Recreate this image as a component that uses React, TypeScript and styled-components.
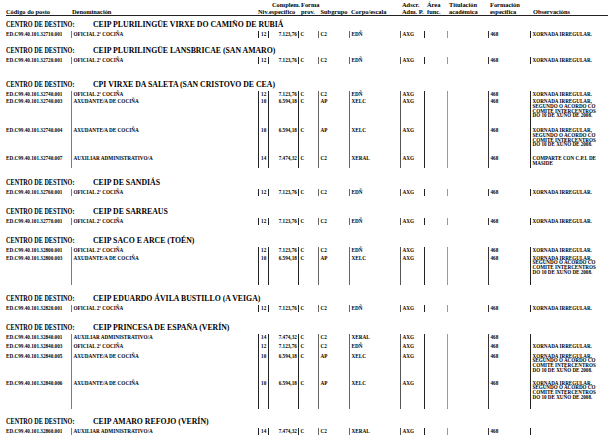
import React from 'react';
import styled, { createGlobalStyle } from 'styled-components';

const GlobalStyle = createGlobalStyle`
  html, body {
    margin: 0;
    padding: 0;
    background: #fff;
  }
  body {
    font-family: "Liberation Serif", "Times New Roman", serif;
    color: #000;
  }
`;

// column widths in px, measured off the printed listing
const COLS = '65px 187px 10px 30px 20px 31px 51px 24px 23px 41px 42px 77px';
const BAR_TONES = ['', '#7a7a7a', '#222', '#222', '#222', '#666', '#666', '#555', '#222', '#999', '#333', '#222'];

const Page = styled.div`
  width: 615px;
  height: 439px;
  overflow: hidden;
  padding-left: 6px;
  box-sizing: border-box;
`;

const HeaderGrid = styled.div`
  display: grid;
  grid-template-columns: ${COLS};
  width: 602px;
  padding-top: 1px;
  border-bottom: 1.5px solid #222;
  font-size: 6.4px;
  font-weight: bold;
  line-height: 7px;
`;

const HeadCell = styled.div<{ $indent: number; $indentTop?: number }>`
  display: flex;
  flex-direction: column;
  justify-content: flex-end;
  height: 14px;
  padding-left: ${(p) => p.$indent}px;
  white-space: nowrap;

  span:first-child {
    padding-left: ${(p) => p.$indentTop ?? 0}px;
  }
`;

const Section = styled.section<{ $gap: number }>`
  margin-top: ${(p) => p.$gap}px;
`;

const Title = styled.h2`
  display: flex;
  margin: 0 0 1.5px;
  height: 10px;
  align-items: center;
  font-size: 8.2px;
  font-weight: bold;
  white-space: nowrap;
`;

const TitleLabel = styled.span`
  width: 87px;
  flex: none;
  display: inline-block;
  transform: scaleX(0.76);
  transform-origin: left center;
`;

const TitleName = styled.span`
  display: inline-block;
  transform: scaleX(0.95);
  transform-origin: left center;
`;

const Row = styled.div<{ $h: number }>`
  display: grid;
  grid-template-columns: ${COLS};
  height: ${(p) => p.$h}px;
  font-size: 5.2px;
  font-weight: bold;
  line-height: 4.7px;
`;

const Cell = styled.div<{ $bar: string; $align?: 'left' | 'right' | 'center' }>`
  border-left: ${(p) => (p.$bar ? `1px solid ${p.$bar}` : 'none')};
  padding: 1.2px 1.2px 0 ${(p) => (p.$bar ? 1.5 : 0)}px;
  text-align: ${(p) => p.$align ?? 'left'};
  white-space: nowrap;
  overflow: visible;
`;

const ObsLine = styled.div`
  font-size: 5.1px;
  line-height: 4.7px;
  white-space: nowrap;
`;

type Post = {
  code: string;
  denom: string;
  niv: string;
  comp: string;
  sub: string;
  corpo: string;
  obs: string[];
  h: number;
};

type Centre = { name: string; gap: number; posts: Post[] };

const LONG_OBS = ['XORNADA IRREGULAR,', 'SEGUNDO O ACORDO CO', 'COMITÉ INTERCENTROS', 'DO 10 DE XUÑO DE 2008.'];

const oficial = (code: string, h = 7): Post => ({
  code, denom: 'OFICIAL 2ª COCIÑA', niv: '12', comp: '7.123,76', sub: 'C2', corpo: 'EDÑ', obs: ['XORNADA IRREGULAR.'], h,
});
const axudante = (code: string, h: number): Post => ({
  code, denom: 'AXUDANTE/A DE COCIÑA', niv: '10', comp: '6.594,18', sub: 'AP', corpo: 'XELC', obs: LONG_OBS, h,
});
const auxiliar = (code: string, h: number, obs: string[] = []): Post => ({
  code, denom: 'AUXILIAR ADMINISTRATIVO/A', niv: '14', comp: '7.474,32', sub: 'C2', corpo: 'XERAL', obs, h,
});

const centres: Centre[] = [
  { name: 'CEIP PLURILINGÜE VIRXE DO CAMIÑO DE RUBIÁ', gap: 3, posts: [oficial('ED.C99.40.101.32710.001')] },
  { name: 'CEIP PLURILINGÜE LANSBRICAE (SAN AMARO)', gap: 7.5, posts: [oficial('ED.C99.40.101.32720.001')] },
  {
    name: 'CPI VIRXE DA SALETA (SAN CRISTOVO DE CEA)',
    gap: 15.5,
    posts: [
      oficial('ED.C99.40.101.32740.001', 7.5),
      axudante('ED.C99.40.101.32740.003', 29),
      axudante('ED.C99.40.101.32740.004', 28),
      auxiliar('ED.C99.40.101.32740.007', 13, ['COMPARTE CON C.P.I. DE', 'MASIDE']),
    ],
  },
  { name: 'CEIP DE SANDIÁS', gap: 9, posts: [oficial('ED.C99.40.101.32760.001')] },
  { name: 'CEIP DE SARREAUS', gap: 10.5, posts: [oficial('ED.C99.40.101.32770.001')] },
  {
    name: 'CEIP SACO E ARCE (TOÉN)',
    gap: 10.5,
    posts: [oficial('ED.C99.40.101.32800.001', 8), axudante('ED.C99.40.101.32800.003', 30.5)],
  },
  { name: 'CEIP EDUARDO ÁVILA BUSTILLO (A VEIGA)', gap: 8, posts: [oficial('ED.C99.40.101.32820.001')] },
  {
    name: 'CEIP PRINCESA DE ESPAÑA (VERÍN)',
    gap: 10.5,
    posts: [
      auxiliar('ED.C99.40.101.32840.001', 9),
      oficial('ED.C99.40.101.32840.003', 10),
      axudante('ED.C99.40.101.32840.005', 27),
      axudante('ED.C99.40.101.32840.006', 29.5),
    ],
  },
  { name: 'CEIP AMARO REFOJO (VERÍN)', gap: 7, posts: [auxiliar('ED.C99.40.101.32860.001', 7)] },
];

const Header = () => (
  <HeaderGrid>
    <HeadCell $indent={0}><span>Código do posto</span></HeadCell>
    <HeadCell $indent={1}><span>Denominación</span></HeadCell>
    <HeadCell $indent={0}><span>Niv.</span></HeadCell>
    <HeadCell $indent={1} $indentTop={3}><span>Complem.</span><span>específico</span></HeadCell>
    <HeadCell $indent={3}><span>Forma</span><span>prov.</span></HeadCell>
    <HeadCell $indent={2.5}><span>Subgrupo</span></HeadCell>
    <HeadCell $indent={2}><span>Corpo/escala</span></HeadCell>
    <HeadCell $indent={2}><span>Adscr.</span><span>Adm. P.</span></HeadCell>
    <HeadCell $indent={3}><span>Área</span><span>func.</span></HeadCell>
    <HeadCell $indent={2}><span>Titulación</span><span>académica</span></HeadCell>
    <HeadCell $indent={2}><span>Formación</span><span>específica</span></HeadCell>
    <HeadCell $indent={3}><span>Observacións</span></HeadCell>
  </HeaderGrid>
);

const PostRow = ({ p }: { p: Post }) => {
  const values: { text: React.ReactNode; align?: 'left' | 'right' | 'center' }[] = [
    { text: p.code },
    { text: p.denom },
    { text: p.niv, align: 'center' },
    { text: p.comp, align: 'right' },
    { text: 'C' },
    { text: p.sub },
    { text: p.corpo },
    { text: 'AXG' },
    { text: '' },
    { text: '' },
    { text: '468' },
    { text: p.obs.map((l) => <ObsLine key={l}>{l}</ObsLine>) },
  ];
  return (
    <Row $h={p.h}>
      {values.map((v, i) => (
        <Cell key={i} $bar={BAR_TONES[i]} $align={v.align}>
          {v.text}
        </Cell>
      ))}
    </Row>
  );
};

export default function App() {
  return (
    <Page>
      <GlobalStyle />
      <Header />
      {centres.map((c) => (
        <Section key={c.name} $gap={c.gap}>
          <Title>
            <TitleLabel>CENTRO DE DESTINO:</TitleLabel>
            <TitleName>{c.name}</TitleName>
          </Title>
          {c.posts.map((p) => (
            <PostRow key={p.code} p={p} />
          ))}
        </Section>
      ))}
    </Page>
  );
}
